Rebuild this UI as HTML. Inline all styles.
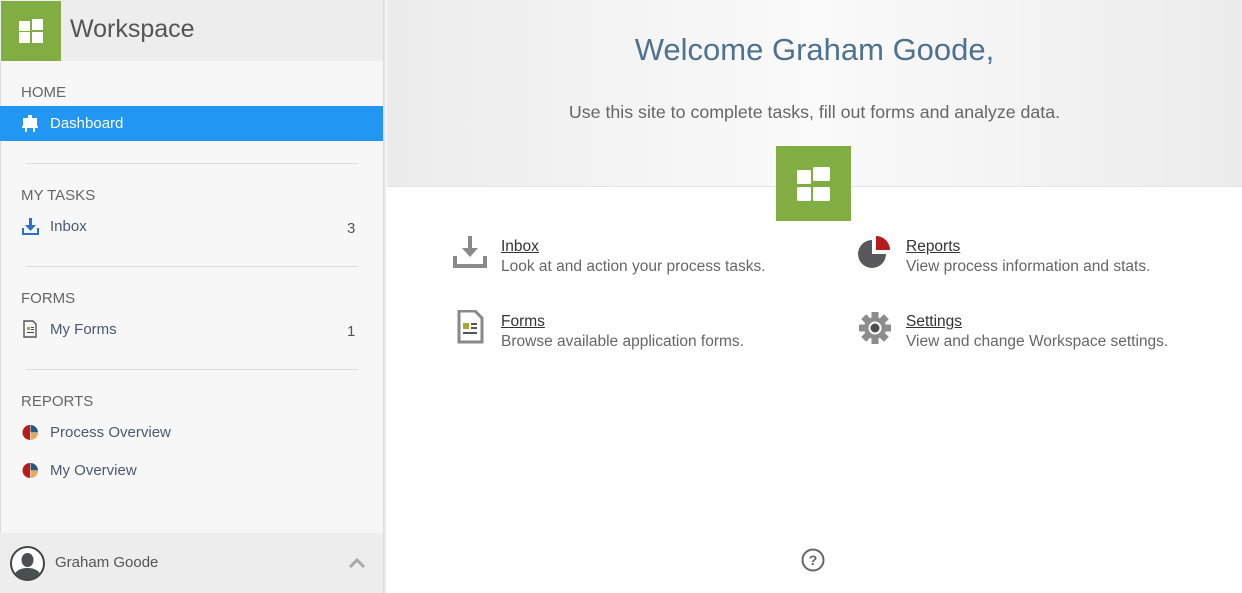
<!DOCTYPE html>
<html><head><meta charset="utf-8"><style>
*{margin:0;padding:0;box-sizing:border-box}
body{width:1242px;height:593px;overflow:hidden;font-family:"Liberation Sans",sans-serif;background:#fff;position:relative}
.side{position:absolute;left:0;top:0;width:384px;height:593px;background:#f7f7f7;border-left:1px solid #ddd}
.shadow{position:absolute;left:383px;top:0;width:4px;height:593px;background:linear-gradient(90deg,#d8d8d8,#fff)}
.hdr{position:absolute;left:0;top:0;width:383px;height:61px;background:#ededed}
.logo{position:absolute;left:1px;top:1px;width:60px;height:60px;background:#82ad43}
.hdr .t{position:absolute;left:70px;top:15px;font-size:25px;color:#555}
.sec{position:absolute;left:21px;font-size:15px;color:#666}
.item{position:absolute;left:50px;font-size:15px;color:#4a5a70}
.cnt{position:absolute;left:347px;font-size:15px;color:#555}
.hr{position:absolute;left:26px;width:332px;height:1px;background:#ddd}
.act{position:absolute;left:0;top:106px;width:383px;height:35px;background:#2196f3}
.foot{position:absolute;left:0;top:533px;width:383px;height:60px;background:#ededed}
.top{position:absolute;left:387px;top:0;right:0;height:187px;background:linear-gradient(90deg,#ececec,#fafafa 50%,#ececec);border-bottom:1px solid #e4e4e4}
h1{position:absolute;left:387px;right:0;top:32px;text-align:center;font-weight:normal;font-size:31px;color:#4f7290}
.sub{position:absolute;left:387px;right:0;top:102px;text-align:center;font-size:17.8px;color:#666}
.big{position:absolute;left:776px;top:146px;width:75px;height:75px;background:#82ad43}
.tl{position:absolute;font-size:15.5px;color:#333;text-decoration:underline}
.ds{position:absolute;font-size:15.5px;color:#666}
</style></head><body>
<div class="top"></div>
<h1>Welcome Graham Goode,</h1>
<div class="sub">Use this site to complete tasks, fill out forms and analyze data.</div>
<div class="big"><svg width="75" height="75"><g fill="#fff"><rect x="21" y="24" width="14" height="14" rx="1.5"/><rect x="37" y="21" width="17" height="14" rx="1.5"/><rect x="21" y="41" width="14" height="14" rx="1.5"/><rect x="37" y="41" width="17" height="14" rx="1.5"/></g></svg></div>

<svg style="position:absolute;left:453px;top:236px" width="34" height="33"><g fill="#8a8a8a"><rect x="15" y="0" width="4" height="14"/><path d="M9 12h16l-8 9z"/><path d="M0 20h4v8h26v-8h4v12H0z"/></g></svg>
<div class="tl" style="left:501px;top:238px">Inbox</div>
<div class="ds" style="left:501px;top:258px">Look at and action your process tasks.</div>
<svg style="position:absolute;left:457px;top:310px" width="27" height="34"><path d="M5 1h13l7 7v24H2V1z" fill="none" stroke="#888" stroke-width="3"/><rect x="6" y="13" width="6" height="6" fill="#a9a72e"/><rect x="14" y="13" width="6" height="2" fill="#555"/><rect x="14" y="17" width="6" height="2" fill="#555"/><rect x="6" y="22" width="14" height="2" fill="#555"/></svg>
<div class="tl" style="left:501px;top:313px">Forms</div>
<div class="ds" style="left:501px;top:333px">Browse available application forms.</div>
<svg style="position:absolute;left:858px;top:236px" width="34" height="33"><path d="M14 4A14 14 0 1 0 28 18H14z" fill="#58585c"/><path d="M18 0a14 14 0 0 1 14 14H18z" fill="#b71c1c"/></svg>
<div class="tl" style="left:906px;top:238px">Reports</div>
<div class="ds" style="left:906px;top:258px">View process information and stats.</div>
<svg style="position:absolute;left:858px;top:311px" width="34" height="34"><g fill="#8d8d8d" transform="translate(17 17)"><circle r="11"/><rect x="-3.5" y="-16" width="7" height="32"/><rect x="-16" y="-3.5" width="32" height="7"/><rect x="-3.5" y="-16" width="7" height="32" transform="rotate(45)"/><rect x="-3.5" y="-16" width="7" height="32" transform="rotate(-45)"/><circle r="6.5" fill="#fff"/><circle r="4.5" fill="#4a5050"/></g></svg>
<div class="tl" style="left:906px;top:313px">Settings</div>
<div class="ds" style="left:906px;top:333px">View and change Workspace settings.</div>
<svg style="position:absolute;left:801px;top:548px" width="24" height="24"><circle cx="12" cy="12" r="10.5" fill="none" stroke="#666" stroke-width="2"/><text x="12" y="17" font-size="14" font-weight="bold" text-anchor="middle" fill="#666" font-family="Liberation Sans">?</text></svg>

<div class="side"></div>
<div class="shadow"></div>
<div class="hdr"><div class="logo"><svg width="60" height="60"><g fill="#fff"><rect x="18" y="20" width="11" height="10"/><rect x="31" y="18" width="11" height="11"/><rect x="18" y="31" width="11" height="11"/><rect x="31" y="31" width="11" height="11"/></g></svg></div><div class="t">Workspace</div></div>
<div class="sec" style="top:84px">HOME</div>
<div class="act"></div>
<svg style="position:absolute;left:22px;top:115px" width="16" height="17"><g fill="#fff"><rect x="6" y="0" width="4" height="3"/><rect x="1" y="3" width="14" height="8"/><rect x="0" y="11" width="16" height="2"/><rect x="3" y="13" width="2" height="4"/><rect x="11" y="13" width="2" height="4"/></g></svg>
<div class="item" style="top:115px;color:#fff">Dashboard</div>
<div class="hr" style="top:163px"></div>
<div class="sec" style="top:187px">MY TASKS</div>
<svg style="position:absolute;left:22px;top:218px" width="17" height="17"><g fill="#2f6fd0"><rect x="7" y="0" width="3" height="8"/><path d="M3 7h11l-5.5 6z"/><path d="M0 10h2v5h13v-5h2v7H0z"/></g></svg>
<div class="item" style="top:218px">Inbox</div><div class="cnt" style="top:220px">3</div>
<div class="hr" style="top:266px"></div>
<div class="sec" style="top:290px">FORMS</div>
<svg style="position:absolute;left:23px;top:320px" width="14" height="18"><path d="M3 1h7l3 3v13H1V1z" fill="none" stroke="#555" stroke-width="1.4"/><rect x="4" y="7" width="3" height="3" fill="#a9a72e"/><rect x="8" y="7" width="3" height="1" fill="#444"/><rect x="8" y="9" width="3" height="1" fill="#444"/><rect x="4" y="12" width="7" height="1" fill="#444"/></svg>
<div class="item" style="top:321px">My Forms</div><div class="cnt" style="top:323px">1</div>
<div class="hr" style="top:369px"></div>
<div class="sec" style="top:393px">REPORTS</div>
<svg style="position:absolute;left:22px;top:424px" width="17" height="17"><path d="M8 1a7.5 7.5 0 0 0 0 15z" fill="#b71c1c"/><path d="M8.5 1a7.5 7.5 0 0 1 7.5 7.5H8.5z" fill="#2b5a78"/><path d="M8.5 9H16a7.5 7.5 0 0 1-7.5 7z" fill="#e8a95a"/></svg>
<div class="item" style="top:424px">Process Overview</div>
<svg style="position:absolute;left:22px;top:462px" width="17" height="17"><path d="M8 1a7.5 7.5 0 0 0 0 15z" fill="#b71c1c"/><path d="M8.5 1a7.5 7.5 0 0 1 7.5 7.5H8.5z" fill="#2b5a78"/><path d="M8.5 9H16a7.5 7.5 0 0 1-7.5 7z" fill="#e8a95a"/></svg>
<div class="item" style="top:462px">My Overview</div>
<div class="foot">
<svg style="position:absolute;left:9px;top:12px" width="37" height="37"><defs><clipPath id="c"><circle cx="18.5" cy="18.5" r="16"/></clipPath></defs><circle cx="18.5" cy="18.5" r="16.5" fill="#fff" stroke="#444" stroke-width="2"/><g clip-path="url(#c)" fill="#4a5050"><ellipse cx="18.5" cy="15" rx="6" ry="7"/><path d="M4 36c0-9 6-13 14.5-13S33 27 33 36z"/></g></svg>
<div style="position:absolute;left:55px;top:21px;font-size:15px;color:#555">Graham Goode</div>
<svg style="position:absolute;left:348px;top:24px" width="18" height="12"><path d="M2 10l7-7 7 7" fill="none" stroke="#aaa" stroke-width="3"/></svg>
</div>
</body></html>
